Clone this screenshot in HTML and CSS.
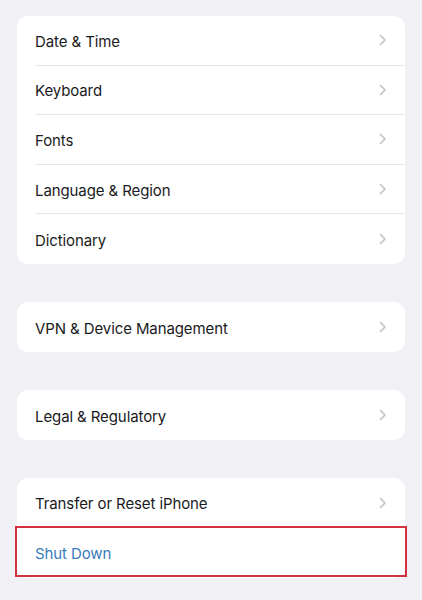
FILE: index.html
```html
<!DOCTYPE html>
<html lang="en">
<head>
<meta charset="utf-8">
<link rel="stylesheet" href="styles.css">
</head>
<body>
<main class="page">
  <section class="card">
    <div class="row"><div class="row-inner"><span class="label">Date &amp; Time</span><svg class="chev" viewBox="0 0 8 12"><path d="M1.5 1.5 L6 6 L1.5 10.5"/></svg></div></div>
    <div class="row"><div class="row-inner"><span class="label">Keyboard</span><svg class="chev" viewBox="0 0 8 12"><path d="M1.5 1.5 L6 6 L1.5 10.5"/></svg></div></div>
    <div class="row"><div class="row-inner"><span class="label">Fonts</span><svg class="chev" viewBox="0 0 8 12"><path d="M1.5 1.5 L6 6 L1.5 10.5"/></svg></div></div>
    <div class="row"><div class="row-inner"><span class="label">Language &amp; Region</span><svg class="chev" viewBox="0 0 8 12"><path d="M1.5 1.5 L6 6 L1.5 10.5"/></svg></div></div>
    <div class="row"><div class="row-inner"><span class="label">Dictionary</span><svg class="chev" viewBox="0 0 8 12"><path d="M1.5 1.5 L6 6 L1.5 10.5"/></svg></div></div>
  </section>
  <section class="card">
    <div class="row"><div class="row-inner"><span class="label">VPN &amp; Device Management</span><svg class="chev" viewBox="0 0 8 12"><path d="M1.5 1.5 L6 6 L1.5 10.5"/></svg></div></div>
  </section>
  <section class="card">
    <div class="row"><div class="row-inner"><span class="label">Legal &amp; Regulatory</span><svg class="chev" viewBox="0 0 8 12"><path d="M1.5 1.5 L6 6 L1.5 10.5"/></svg></div></div>
  </section>
  <section class="card">
    <div class="row"><div class="row-inner"><span class="label">Transfer or Reset iPhone</span><svg class="chev" viewBox="0 0 8 12"><path d="M1.5 1.5 L6 6 L1.5 10.5"/></svg></div></div>
    <div class="row row-highlight"><div class="row-inner"><span class="label label-action">Shut Down</span></div><div class="highlight-box"></div></div>
  </section>
</main>
</body>
</html>
```

FILE: styles.css
```css
html, body {
  margin: 0;
  padding: 0;
  background: #f0f0f5;
}

body {
  width: 422px;
  height: 600px;
  overflow: hidden;
  font-family: "Inter", "Noto Sans", "Liberation Sans", sans-serif;
  -webkit-font-smoothing: antialiased;
}

.page {
  display: flex;
  flex-direction: column;
  gap: 38.4px;
  padding: 16px 17px 0 17px;
}

.card {
  background: #ffffff;
  border-radius: 11px;
}

.row {
  padding-left: 18px;
  height: 49.6px;
  box-sizing: border-box;
  position: relative;
}

.row-inner {
  height: 100%;
  box-sizing: border-box;
  display: flex;
  align-items: center;
  justify-content: space-between;
  padding-right: 18px;
  padding-top: 2px;
  border-bottom: 1px solid #e6e6ea;
}

.row:last-child .row-inner {
  border-bottom: none;
}

.label {
  font-size: 15px;
  color: #1a1a1c;
  letter-spacing: -0.1px;
}

.label-action {
  color: #3a7bbd;
}

.chev {
  width: 8px;
  height: 12px;
  margin-top: -2px;
  fill: none;
  stroke: #c3c3c8;
  stroke-width: 1.7;
  stroke-linecap: round;
  stroke-linejoin: round;
}

.highlight-box {
  position: absolute;
  left: -2px;
  right: -2px;
  top: -2px;
  bottom: 1px;
  border: 2.5px solid #d2323d;
  box-sizing: border-box;
}
```
